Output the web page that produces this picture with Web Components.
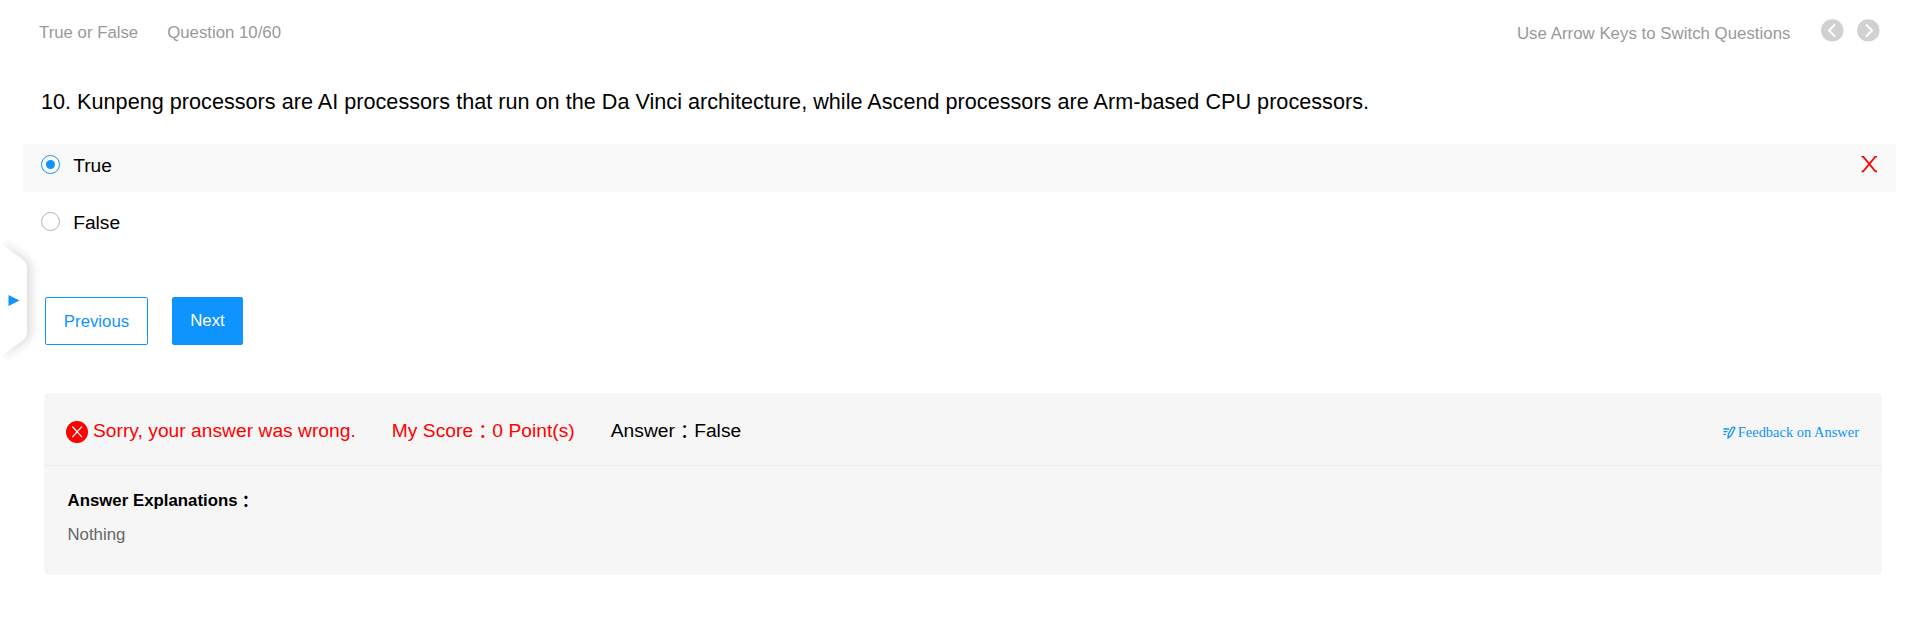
<!DOCTYPE html>
<html lang="en">
<head>
<meta charset="utf-8">
<title>Practice</title>
<style>
html,body{margin:0;height:100%;background:#fff}
body{overflow:hidden;font-family:"Liberation Sans","Noto Sans CJK TC",sans-serif;color:#000}
.colon{vertical-align:-1.5px;line-height:0}
</style>
</head>
<body>
<quiz-page>
  <quiz-header slot="header" kind="True or False" progress="Question 10/60" hint="Use Arrow Keys to Switch Questions"></quiz-header>
  <quiz-question slot="question">10. Kunpeng processors are AI processors that run on the Da Vinci architecture, while Ascend processors are Arm-based CPU processors.</quiz-question>
  <quiz-option slot="options" checked wrong>True</quiz-option>
  <quiz-option slot="options">False</quiz-option>
  <quiz-button slot="actions">Previous</quiz-button>
  <quiz-button slot="actions" primary>Next</quiz-button>
  <quiz-result slot="result">
    <span slot="verdict">Sorry, your answer was wrong.</span>
    <span slot="score">My Score<span class="colon">：</span>0 Point(s)</span>
    <span slot="answer">Answer<span class="colon">：</span>False</span>
    <span slot="feedback">Feedback on Answer</span>
    <span slot="heading">Answer Explanations<span class="colon">：</span></span>
    <span slot="body">Nothing</span>
  </quiz-result>
  <drawer-handle slot="drawer"></drawer-handle>
</quiz-page>
<script>
const define = (name, html) => customElements.define(name, class extends HTMLElement {
  constructor() {
    super();
    this.attachShadow({ mode: 'open' }).innerHTML = html;
  }
  connectedCallback() {
    this.shadowRoot.querySelectorAll('[data-attr]').forEach(n => { n.textContent = this.getAttribute(n.dataset.attr); });
  }
});

define('quiz-page', `<style>
  :host{display:flex;flex-direction:column;position:relative;height:625px;box-sizing:border-box;padding:0 22px 0 23px}
  .options{display:flex;flex-direction:column;gap:9px;margin-top:28px}
  .actions{display:flex;gap:24px;padding-left:22px;margin-top:48px}
  .result{padding:0 14px 0 21px;margin-top:48px}
</style>
<slot name="header"></slot>
<slot name="question"></slot>
<div class="options"><slot name="options"></slot></div>
<div class="actions"><slot name="actions"></slot></div>
<div class="result"><slot name="result"></slot></div>
<slot name="drawer"></slot>`);

define('quiz-header', `<style>
  :host{display:flex;height:66px;box-sizing:border-box;padding:23px 16px 0 16px;font-size:16.8px;line-height:20px;color:#999}
  .progress{margin-left:29px}
  .hint{margin:1px 30px 0 auto;letter-spacing:.035px}
  svg{display:block;width:23px;height:23px;margin:-4px 0 0}
  svg+svg{margin-left:13.5px}
</style>
<span data-attr="kind"></span><span class="progress" data-attr="progress"></span>
<span class="hint" data-attr="hint"></span>
<svg viewBox="0 0 23 23"><circle cx="11.3" cy="11.4" r="11.2" fill="#d1d1d1"/><path d="M14 5.5L8 11.5L14 17.5" fill="none" stroke="#fff" stroke-width="2"/></svg>
<svg viewBox="0 0 23 23"><circle cx="11.3" cy="11.4" r="11.2" fill="#d1d1d1"/><path d="M9 5.5L15 11.5L9 17.5" fill="none" stroke="#fff" stroke-width="2"/></svg>`);

define('quiz-question', `<style>
  :host{display:block;padding:22px 0 0 18px;height:50px;box-sizing:border-box;font-size:21.6px;line-height:28px;letter-spacing:.025px;white-space:nowrap}
</style><slot></slot>`);

define('quiz-option', `<style>
  :host{display:flex;height:48px;font-size:19.2px;line-height:22px;box-sizing:border-box;padding:0 18px}
  :host([checked]){background:#f9f9f9}
  .radio{flex:none;width:19px;height:19px;box-sizing:border-box;border:1px solid #b3b3b3;border-radius:50%;margin-top:11px;background:#fff;display:grid;place-items:center}
  :host([checked]) .radio{border-color:#0f93ff}
  :host([checked]) .radio::after{content:"";width:9px;height:9px;border-radius:50%;background:#0f93ff}
  .label{margin:11px 0 0 13.2px}
  svg{display:none;width:17px;height:17px;margin:12px 0 0 auto}
  :host([wrong]) svg{display:block}
</style>
<span class="radio"></span><span class="label"><slot></slot></span>
<svg viewBox="0 0 17 17"><path d="M.5 .6H2.2L14.4 15.4H16M16 .6H14.4L2.2 15.4H.5" fill="none" stroke="#f00" stroke-width="1.7"/></svg>`);

define('quiz-button', `<style>
  :host{display:flex;align-items:center;justify-content:center;width:103px;height:48px;box-sizing:border-box;border:1px solid #0f93ff;border-radius:2px;padding:2px 0 0;font-size:16.8px;line-height:20px;color:#0f93ff;background:#fff}
  :host([primary]){width:71px;background:#0f93ff;color:#fff;padding:0}
</style><slot></slot>`);

define('quiz-result', `<style>
  :host{display:block;height:182px;background:#f6f6f6;border-radius:5px;box-sizing:border-box}
  .top{display:flex;height:73px;box-sizing:border-box;border-bottom:1px solid #ececec;padding:27px 23px 0 22px;font-size:19.2px;line-height:22px;letter-spacing:.03px;color:#f00}
  .icon{width:22px;height:22px;margin:1px 5px 0 0}
  .gap{margin-left:36px}
  .answer{color:#000}
  .feedback{display:flex;margin-left:auto;font:14.4px/18px "Liberation Serif",serif;color:#0f93ff;padding-top:3px;letter-spacing:.03px}
  .pen{width:13px;height:13px;margin:3px 2px 0 0}
  .detail{padding:24px 0 0 23.5px;font-size:16.8px;line-height:22px}
  .heading{font-weight:700;letter-spacing:.02px}
  .body{color:#666;margin-top:12px}
</style>
<div class="top">
  <svg class="icon" viewBox="0 0 22 22"><circle cx="11" cy="11" r="11" fill="#f00"/><path d="M6.3 5.5L16 16.2M16 5.5L6.3 16.2" fill="none" stroke="#fff" stroke-width="1.2"/></svg>
  <slot name="verdict"></slot>
  <span class="gap"><slot name="score"></slot></span>
  <span class="gap answer"><slot name="answer"></slot></span>
  <span class="feedback"><svg class="pen" viewBox="0 0 13 13" fill="none" stroke="#0f93ff" stroke-width="1.3"><path d="M.5 3H6M.5 5.7H4.5M.5 8.4H3M5 12L5.3 8.5L9 1.8Q10.5 .6 12 2L8.3 9.3Z"/></svg><slot name="feedback"></slot></span>
</div>
<div class="detail">
  <div class="heading"><slot name="heading"></slot></div>
  <div class="body"><slot name="body"></slot></div>
</div>`);

define('drawer-handle', `<style>
  :host{position:absolute;left:0;top:235px;width:50px;height:130px}
  svg{display:block;filter:drop-shadow(5px 0 4px rgba(0,0,0,.12))}
</style>
<svg width="50" height="130" viewBox="0 0 50 130"><path d="M0 8L3 10L22 24Q27 28 27 34V96Q27 102 22 106L3 120L0 122Z" fill="#fff"/><path d="M8.5 60L19.5 65.5L8.5 71Z" fill="#0f93ff"/></svg>`);
</script>
</body>
</html>
